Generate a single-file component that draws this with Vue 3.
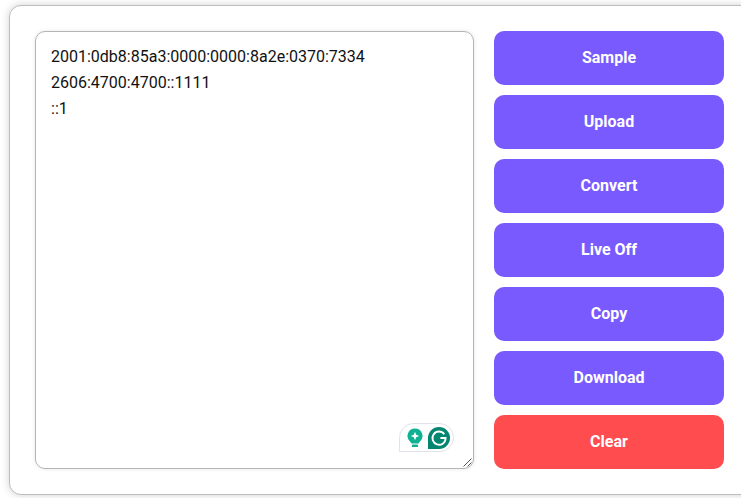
<script setup>
const lines = ['2001:0db8:85a3:0000:0000:8a2e:0370:7334', '2606:4700:4700::1111', '::1']
const buttons = ['Sample', 'Upload', 'Convert', 'Live Off', 'Copy', 'Download', 'Clear']
</script>

<template>
  <div class="page">
    <div class="card">
      <div class="editor">
        <div v-for="line in lines" :key="line" class="line">{{ line }}</div>
        <div class="grammarly">
          <svg width="16" height="20" viewBox="0 0 16 20">
            <path d="M8 0.5a7.5 7.5 0 0 1 4.6 13.4c-.6.5-.9 1-.9 1.6H4.3c0-.6-.3-1.1-.9-1.6A7.5 7.5 0 0 1 8 .5z" fill="#0fb192" />
            <path d="M8 3.8l1.2 3 3 1.2-3 1.2L8 12.2 6.8 9.2 3.8 8l3-1.2z" fill="#fff" />
            <rect x="4.8" y="16.5" width="6.4" height="2.6" rx="1.2" fill="#0fb192" />
          </svg>
          <svg width="22" height="22" viewBox="0 0 22 22">
            <path d="M11 0a11 11 0 0 1 0 22H0V11A11 11 0 0 1 11 0z" fill="#038570" />
            <path d="M16.3 7.2A6.6 6.6 0 1 0 17.6 11h-5.2" fill="none" stroke="#fff" stroke-width="1.9" />
          </svg>
        </div>
        <svg class="grip" width="9" height="9" viewBox="0 0 9 9">
          <path d="M0.5 8.5L8.5 0.5M4.5 8.5L8.5 4.5" stroke="#555" stroke-width="1" />
        </svg>
      </div>
      <div class="actions">
        <button
          v-for="label in buttons"
          :key="label"
          class="btn"
          :class="{ danger: label === 'Clear' }"><span class="label">{{ label }}</span></button>
      </div>
    </div>
  </div>
</template>

<style>
  html,
  body {
    margin: 0;
    background: #fff;
    overflow: hidden;
  }
</style>

<style scoped>
  .page {
    width: 741px;
    height: 498px;
    overflow: hidden;
    padding: 5px 0 0 9px;
    box-sizing: border-box;
    font-family: Roboto, sans-serif;
  }

  .card {
    display: flex;
    gap: 20px;
    width: 760px;
    height: 490px;
    box-sizing: border-box;
    padding: 25px;
    background: #fff;
    border: 1px solid #bdbdbd;
    border-radius: 12px;
    box-shadow: 0 0 8px rgba(0, 0, 0, 0.18);
  }

  .editor {
    position: relative;
    width: 439px;
    height: 438px;
    box-sizing: border-box;
    padding: 12px 15px;
    border: 1px solid #b4b4b4;
    border-radius: 10px;
    font-size: 16px;
    line-height: 26px;
    color: #111;
    box-shadow: 0 0 4px rgba(0, 0, 0, 0.1);
  }

  .grammarly {
    position: absolute;
    right: 19px;
    bottom: 16px;
    display: flex;
    align-items: center;
    gap: 5px;
    height: 29px;
    padding: 0 3px 0 7px;
    background: #fff;
    border: 1px solid #e2e2ea;
    border-radius: 15px 15px 15px 0;
    box-sizing: border-box;
  }

  .grip {
    position: absolute;
    right: 1px;
    bottom: 1px;
  }

  .actions {
    display: flex;
    flex-direction: column;
    gap: 10px;
    width: 230px;
  }

  .btn {
    height: 54px;
    padding: 0 0 2px;
    border: none;
    border-radius: 10px;
    background: #785aff;
    color: #fff;
    font-family: Roboto, sans-serif;
    font-size: 16px;
    font-weight: 700;
  }

  .btn.danger {
    background: #ff4d4f;
  }
</style>
